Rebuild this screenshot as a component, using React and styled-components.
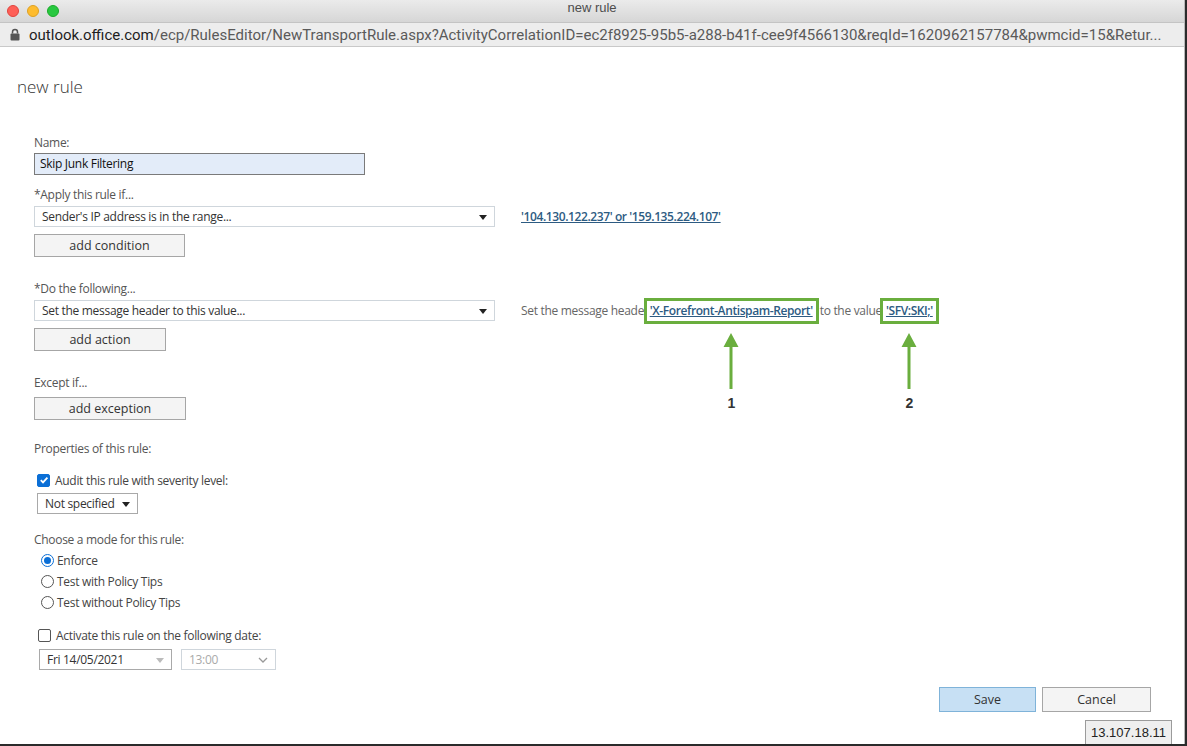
import React from 'react';
import styled, { createGlobalStyle } from 'styled-components';

const FORM_FONT = '"Open Sans", "Noto Sans", sans-serif';
const GREEN = '#6aae3e';
const LINK = '#2d5b82';

const GlobalStyle = createGlobalStyle`
  html, body {
    margin: 0;
    padding: 0;
    background: #2b2b2b;
  }
  * {
    box-sizing: border-box;
  }
`;

const Window = styled.div`
  width: 1185px;
  height: 744px;
  background: #fff;
  border-right: 1px solid #b9b9b9;
  display: flex;
  flex-direction: column;
  position: relative;
  overflow: hidden;
`;

const TitleBar = styled.div`
  height: 22px;
  background: linear-gradient(#ebebeb, #d6d6d6);
  display: flex;
  align-items: center;
  position: relative;
  padding-left: 7px;
  gap: 8px;
`;

const Light = styled.span`
  width: 12px;
  height: 12px;
  border-radius: 50%;
  background: ${p => p.color};
  border: 1px solid ${p => p.edge};
`;

const Title = styled.div`
  position: absolute;
  left: 0;
  right: 0;
  top: 0;
  line-height: 22px;
  text-align: center;
  font: 13px "Liberation Sans", sans-serif;
  color: #4d4d4d;
  pointer-events: none;
`;

const UrlBar = styled.div`
  height: 25px;
  background: #ededed;
  border-top: 1px solid #c4c4c4;
  border-bottom: 1px solid #c9c9c9;
  display: flex;
  align-items: center;
  padding-left: 10px;
  gap: 9px;
  white-space: nowrap;
  overflow: hidden;
`;

const UrlText = styled.div`
  font: 15px Roboto, "Liberation Sans", sans-serif;
  color: #5a5a5a;
  b {
    font-weight: 400;
    color: #1e1e1e;
  }
`;

const Page = styled.div`
  flex: 1;
  font-family: ${FORM_FONT};
  font-size: 12px;
  letter-spacing: -0.3px;
  color: #444;
  display: flex;
  flex-direction: column;
`;

const Heading = styled.h1`
  margin: 29px 0 0 17px;
  font-weight: 300;
  font-size: 17px;
  line-height: 22px;
  letter-spacing: 0;
  color: #333;
`;

const Form = styled.div`
  padding-left: 34px;
  margin-top: 37px;
  display: flex;
  flex-direction: column;
`;

const Label = styled.div`
  line-height: 16px;
  color: #555;
  margin-top: ${p => p.gap || 0}px;
  margin-bottom: ${p => p.below || 0}px;
`;

const TextInput = styled.div`
  width: 331px;
  height: 22px;
  background: #e3ecf9;
  border: 1px solid #7a7a7a;
  color: #111;
  padding-left: 5px;
  line-height: 20px;
  margin-top: 2px;
`;

const Row = styled.div`
  display: flex;
  align-items: center;
  gap: 26px;
  height: 21px;
`;

const Select = styled.div`
  width: ${p => p.w}px;
  height: 21px;
  flex: none;
  border: 1px solid ${p => (p.dark ? '#a9a9a9' : '#cfd6dc')};
  background: #fff;
  display: flex;
  align-items: center;
  justify-content: space-between;
  padding: 0 7px 0 7px;
  color: ${p => (p.disabled ? '#aaa' : '#333')};
  margin-left: ${p => p.indent || 0}px;
  margin-top: ${p => p.top || 0}px;
`;

const Caret = styled.span`
  width: 0;
  height: 0;
  border-left: 4px solid transparent;
  border-right: 4px solid transparent;
  border-top: 5px solid ${p => p.color || '#222'};
  margin-top: 1px;
`;

const Button = styled.button`
  width: ${p => p.w}px;
  height: ${p => (p.tall ? 25 : 23)}px;
  margin-top: ${p => (p.top === undefined ? 7 : p.top)}px;
  background: ${p => (p.primary ? '#c7e0f4' : '#f4f4f4')};
  border: 1px solid ${p => (p.primary ? '#7fb3d9' : '#a6a6a6')};
  font-family: ${FORM_FONT};
  font-size: 12.5px;
  color: #333;
  padding: 0;
  cursor: pointer;
`;

const Detail = styled.div`
  color: #666;
  display: flex;
  align-items: center;
  white-space: nowrap;
`;

const Link = styled.a`
  color: ${LINK};
  font-weight: 600;
  letter-spacing: -0.4px;
  text-decoration: underline;
  cursor: pointer;
`;

const Highlight = styled.span`
  position: relative;
  display: inline-flex;
  align-items: center;
  height: 26px;
  padding: 0 3px;
  margin-left: ${p => p.pull || 0}px;
  margin-right: 1px;
  border: 3px solid ${GREEN};
  background: #fff;
`;

const Annotation = styled.div`
  position: absolute;
  left: 50%;
  top: 32px;
  transform: translateX(-50%);
  display: flex;
  flex-direction: column;
  align-items: center;
  gap: 6px;
  font: bold 14px "Liberation Sans", sans-serif;
  color: #333;
`;

const CheckRow = styled.label`
  display: flex;
  align-items: center;
  gap: 5px;
  height: 16px;
  margin-top: ${p => p.gap || 0}px;
  margin-left: ${p => p.indent || 0}px;
  color: #444;
`;

const Box = styled.span`
  width: 13px;
  height: 13px;
  border-radius: 2px;
  border: 1px solid ${p => (p.on ? '#0b6fd6' : '#555')};
  background: ${p => (p.on ? '#0b6fd6' : '#fff')};
  display: flex;
  align-items: center;
  justify-content: center;
`;

const RadioRow = styled.label`
  display: flex;
  align-items: center;
  gap: 3px;
  height: 21px;
  margin-left: 7px;
  color: #444;
`;

const Radio = styled.span`
  width: 13px;
  height: 13px;
  border-radius: 50%;
  border: 1px solid ${p => (p.on ? '#0b6fd6' : '#555')};
  display: flex;
  align-items: center;
  justify-content: center;
  &::after {
    content: '';
    width: 7px;
    height: 7px;
    border-radius: 50%;
    background: ${p => (p.on ? '#0b6fd6' : 'transparent')};
  }
`;

const DateRow = styled.div`
  display: flex;
  gap: 9px;
  margin-top: 6px;
  margin-left: 5px;
`;

const Footer = styled.div`
  display: flex;
  justify-content: flex-end;
  gap: 6px;
  padding-right: 33px;
`;

const Tip = styled.div`
  position: absolute;
  right: 12px;
  bottom: 0;
  height: 24px;
  padding: 0 5px;
  background: #efefef;
  border: 1px solid #9b9b9b;
  border-bottom: none;
  font: 13px "Liberation Sans", sans-serif;
  color: #222;
  line-height: 23px;
`;

const Lock = () => (
  <svg width="10" height="13" viewBox="0 0 10 13">
    <path d="M2.5 5.5V4a2.5 2.5 0 0 1 5 0v1.5" fill="none" stroke="#555" strokeWidth="1.5" />
    <rect x="0.5" y="5.5" width="9" height="7" rx="1" fill="#555" />
  </svg>
);

const Tick = () => (
  <svg width="10" height="10" viewBox="0 0 10 10">
    <path d="M1.8 5.2 4 7.4 8.4 2.6" fill="none" stroke="#fff" strokeWidth="1.8" />
  </svg>
);

const Chevron = () => (
  <svg width="10" height="6" viewBox="0 0 10 6">
    <path d="M1 1l4 4 4-4" fill="none" stroke="#999" strokeWidth="1.3" />
  </svg>
);

const Arrow = () => (
  <svg width="16" height="56" viewBox="0 0 16 56">
    <path d="M8 0 15.5 14H9.5V56H6.5V14H0.5Z" fill={GREEN} />
  </svg>
);

const App = () => (
  <Window>
    <GlobalStyle />
    <TitleBar>
      <Light color="#fe5f57" edge="#e0443e" />
      <Light color="#febc2e" edge="#dea123" />
      <Light color="#28c840" edge="#1aab29" />
      <Title>new rule</Title>
    </TitleBar>
    <UrlBar>
      <Lock />
      <UrlText>
        <b>outlook.office.com</b>/ecp/RulesEditor/NewTransportRule.aspx?ActivityCorrelationID=ec2f8925-95b5-a288-b41f-cee9f4566130&amp;reqId=1620962157784&amp;pwmcid=15&amp;Retur...
      </UrlText>
    </UrlBar>

    <Page>
      <Heading>new rule</Heading>
      <Form>
        <Label>Name:</Label>
        <TextInput>Skip Junk Filtering</TextInput>

        <Label gap={12} below={3}>*Apply this rule if...</Label>
        <Row>
          <Select w={461}>
            Sender's IP address is in the range...
            <Caret />
          </Select>
          <Link>'104.130.122.237' or '159.135.224.107'</Link>
        </Row>
        <Button w={151}>add condition</Button>

        <Label gap={24} below={3}>*Do the following...</Label>
        <Row>
          <Select w={461}>
            Set the message header to this value...
            <Caret />
          </Select>
          <Detail>
            Set the message header
            <Highlight pull={-5}>
              <Link>'X-Forefront-Antispam-Report'</Link>
              <Annotation>
                <Arrow />
                1
              </Annotation>
            </Highlight>
            to the value
            <Highlight pull={-2}>
              <Link>'SFV:SKI;'</Link>
              <Annotation>
                <Arrow />
                2
              </Annotation>
            </Highlight>
          </Detail>
        </Row>
        <Button w={132}>add action</Button>

        <Label gap={24}>Except if...</Label>
        <Button w={152} top={6}>add exception</Button>

        <Label gap={21}>Properties of this rule:</Label>
        <CheckRow gap={15} indent={3}>
          <Box on><Tick /></Box>
          Audit this rule with severity level:
        </CheckRow>
        <Select w={101} dark indent={3} top={5}>
          Not specified
          <Caret />
        </Select>

        <Label gap={18} below={2}>Choose a mode for this rule:</Label>
        <RadioRow><Radio on />Enforce</RadioRow>
        <RadioRow><Radio />Test with Policy Tips</RadioRow>
        <RadioRow><Radio />Test without Policy Tips</RadioRow>

        <CheckRow gap={14} indent={4}>
          <Box />
          Activate this rule on the following date:
        </CheckRow>
        <DateRow>
          <Select w={133} dark>
            Fri 14/05/2021
            <Caret color="#bbb" />
          </Select>
          <Select w={95} disabled>
            13:00
            <Chevron />
          </Select>
        </DateRow>
      </Form>

      <Footer>
        <Button primary tall w={97} top={17}>Save</Button>
        <Button tall w={109} top={17}>Cancel</Button>
      </Footer>
    </Page>
    <Tip>13.107.18.11</Tip>
  </Window>
);

export default App;
